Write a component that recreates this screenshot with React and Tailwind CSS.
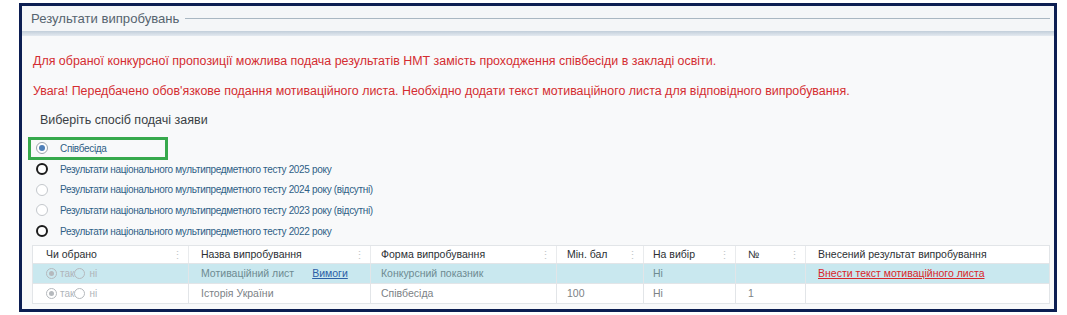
import React from 'react';

const FONT = { fontFamily: '"Liberation Sans", Arial, sans-serif' };

const OPTIONS = [
  { label: 'Співбесіда', state: 'checked' },
  { label: 'Результати національного мультипредметного тесту 2025 року', state: 'open' },
  { label: 'Результати національного мультипредметного тесту 2024 року (відсутні)', state: 'disabled' },
  { label: 'Результати національного мультипредметного тесту 2023 року (відсутні)', state: 'disabled' },
  { label: 'Результати національного мультипредметного тесту 2022 року', state: 'open' },
];

const COLS = [
  { title: 'Чи обрано', w: 'w-[156px]', pad: 'pl-[13px]' },
  { title: 'Назва випробування', w: 'w-[182px]', pad: 'pl-[12px]' },
  { title: 'Форма випробування', w: 'w-[186px]', pad: 'pl-[10px]' },
  { title: 'Мін. бал', w: 'w-[87px]', pad: 'pl-[10px]' },
  { title: 'На вибір', w: 'w-[92px]', pad: 'pl-[9px]' },
  { title: '№', w: 'w-[70px]', pad: 'pl-[12px]' },
  { title: 'Внесений результат випробування', w: 'flex-1', pad: 'pl-[12px]', last: true },
];

function Radio({ state }) {
  if (state === 'checked') {
    return (
      <span className="flex h-[12px] w-[12px] items-center justify-center rounded-full border border-[#9aa3ab] bg-white">
        <span className="h-[6px] w-[6px] rounded-full bg-[#4f7fb8]" />
      </span>
    );
  }
  if (state === 'open') {
    return <span className="h-[12px] w-[12px] rounded-full border-[2px] border-[#1c1c1c] bg-white" />;
  }
  return <span className="h-[12px] w-[12px] rounded-full border border-[#c4c8cc] bg-white" />;
}

function SmallRadio({ checked }) {
  return checked ? (
    <span className="flex h-[11px] w-[11px] items-center justify-center rounded-full border border-[#b5b9bd]">
      <span className="h-[5px] w-[5px] rounded-full bg-[#b5b9bd]" />
    </span>
  ) : (
    <span className="h-[11px] w-[11px] rounded-full border border-[#b5b9bd]" />
  );
}

function Choice() {
  return (
    <div className="flex items-center text-[10px] text-[#b0b5ba]">
      <SmallRadio checked />
      <span className="ml-[3px]">так</span>
      <SmallRadio />
      <span className="ml-[4px]">ні</span>
    </div>
  );
}

function Cell({ col, children }) {
  return (
    <div className={`${col.w} ${col.pad} flex h-full items-center border-r border-[#e2e5e8] last:border-r-0`}>
      {children}
    </div>
  );
}

export default function App() {
  const rows = [
    {
      bg: 'bg-[#c9e8ef]',
      cells: [
        <Choice />,
        <div className="flex items-center text-[#6e8b92]">
          <span>Мотиваційний лист</span>
          <span className="ml-[18px] text-[#2d5fa6] underline">Вимоги</span>
        </div>,
        <span className="text-[#6e8b92]">Конкурсний показник</span>,
        null,
        <span className="text-[#6e8b92]">Ні</span>,
        null,
        <span className="text-[#d9262b] underline">Внести текст мотиваційного листа</span>,
      ],
    },
    {
      bg: 'bg-white',
      cells: [
        <Choice />,
        <span className="text-[#7c8286]">Історія України</span>,
        <span className="text-[#7c8286]">Співбесіда</span>,
        <span className="text-[#7c8286]">100</span>,
        <span className="text-[#7c8286]">Ні</span>,
        <span className="text-[#7c8286]">1</span>,
        null,
      ],
    },
  ];

  return (
    <div className="h-[315px] w-[1067px] bg-white pl-[19px] pt-[3px]" style={FONT}>
      <div className="flex h-[309px] w-[1038px] flex-col border-[3px] border-[#0c1e52] bg-[#f8f9fa]">
        {/* title band */}
        <div className="flex h-[25px] items-center bg-[#f4f6f8] pl-[9px] pr-[4px]">
          <span className="text-[13.1px] text-[#56646f]">Результати випробувань</span>
          <div className="ml-[6px] h-[1.5px] flex-1 bg-[#a9b7c2]" />
        </div>
        <div className="h-[5px] bg-gradient-to-b from-[#c2ceda] to-[#e4eaf0]" />

        <div className="flex flex-1 flex-col pl-[11px] pr-[4px]">
          <div className="mt-[17px] text-[12.45px] leading-[16px] text-[#d42d31]">
            Для обраної конкурсної пропозиції можлива подача результатів НМТ замість проходження співбесіди в закладі освіти.
          </div>
          <div className="mt-[14px] text-[12.45px] leading-[16px] text-[#d42d31]">
            Увага! Передбачено обов'язкове подання мотиваційного листа. Необхідно додати текст мотиваційного листа для відповідного випробування.
          </div>
          <div className="ml-[7px] mt-[13px] text-[12.5px] leading-[16px] text-[#3a3f44]">Виберіть спосіб подачі заяви</div>

          <div className="mt-[10px] flex flex-col">
            {OPTIONS.map((o, i) => (
              <div key={i} className="relative flex h-[20.7px] items-center pl-[3px]">
                <Radio state={o.state} />
                <span className="ml-[12px] text-[10px] tracking-[-0.33px] text-[#2f5f86]">{o.label}</span>
                {i === 0 && (
                  <div className="absolute left-[-5px] top-[-1px] h-[23px] w-[140px] border-[3px] border-[#36a94c]" />
                )}
              </div>
            ))}
          </div>

          {/* table */}
          <div className="mt-[4px] ml-[-1px] flex w-[1018px] flex-col border border-[#e2e5e8] bg-white text-[10.5px]">
            <div className="flex h-[17px] items-center text-[#2b2f33]">
              {COLS.map((c, i) => (
                <div key={i} className={`${c.w} ${c.pad} relative flex h-full items-center ${c.last ? '' : 'border-r border-[#e9ebed]'}`}>
                  <span>{c.title}</span>
                  {!c.last && <span className="absolute right-[5px] text-[11px] text-[#c2c6ca]">⋮</span>}
                </div>
              ))}
            </div>
            {rows.map((r, ri) => (
              <div key={ri} className={`flex h-[20px] items-center border-t border-[#e2e5e8] ${r.bg}`}>
                {COLS.map((c, ci) => (
                  <Cell key={ci} col={c}>{r.cells[ci]}</Cell>
                ))}
              </div>
            ))}
          </div>
        </div>
      </div>
    </div>
  );
}
